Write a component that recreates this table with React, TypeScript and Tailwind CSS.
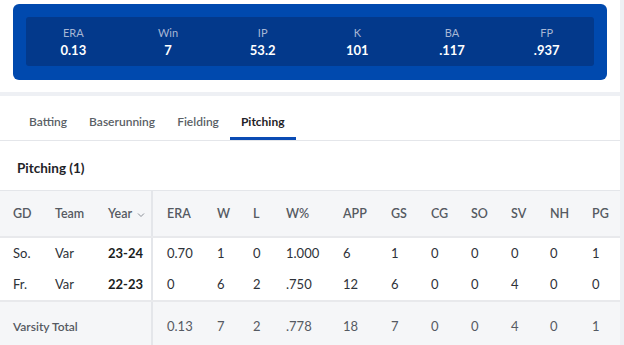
import React from "react";

const stats = [
  { label: "ERA", value: "0.13" },
  { label: "Win", value: "7" },
  { label: "IP", value: "53.2" },
  { label: "K", value: "101" },
  { label: "BA", value: ".117" },
  { label: "FP", value: ".937" },
];

const tabs = ["Batting", "Baserunning", "Fielding", "Pitching"];

const grid =
  "grid grid-cols-[42px_53px_45px_64px_36px_33px_57px_48px_40px_40px_40px_39px_42px_28px] pl-[13px]";

const statCols = ["ERA", "W", "L", "W%", "APP", "GS", "CG", "SO", "SV", "NH", "PG"];

const rows = [
  { gd: "So.", team: "Var", year: "23-24", vals: ["0.70", "1", "0", "1.000", "6", "1", "0", "0", "0", "0", "1"] },
  { gd: "Fr.", team: "Var", year: "22-23", vals: ["0", "6", "2", ".750", "12", "6", "0", "0", "4", "0", "0"] },
];

const totals = ["0.13", "7", "2", ".778", "18", "7", "0", "0", "4", "0", "1"];

export default function App() {
  return (
    <div
      className="w-[624px] h-[345px] overflow-hidden bg-[#eef0f4]"
      style={{ fontFamily: 'Lato, "Noto Sans", Arial, sans-serif' }}
    >
      {/* Top card */}
      <div className="w-[620px] h-[92px] bg-white pt-[4px] pl-[13px]">
        <div className="w-[594px] h-[76px] rounded-[6px] bg-[#0049ae] pt-[13px] px-[13px]">
          <div className="w-[568px] h-[49px] rounded-[3px] bg-[#03398b] grid grid-cols-6">
            {stats.map((s) => (
              <div key={s.label} className="flex flex-col items-center pt-[8px]">
                <span className="text-[11px] leading-[15px] text-[#a7b6d4]">{s.label}</span>
                <span className="text-[13px] leading-[18px] font-bold text-white mt-[1px]">{s.value}</span>
              </div>
            ))}
          </div>
        </div>
      </div>

      {/* Bottom card */}
      <div className="w-[620px] h-[249px] bg-white mt-[4px]">
        <div className="h-[45px] border-b border-[#e4e6ea] flex pl-[18px]">
          {tabs.map((t) => {
            const active = t === "Pitching";
            return (
              <div
                key={t}
                className={
                  "px-[11px] h-[44px] flex items-center pt-[10px] text-[12px] border-b-[3px] " +
                  (active
                    ? "border-[#0a4bb4] text-[#1f2328] font-bold"
                    : "border-transparent text-[#5a5f66] font-semibold")
                }
              >
                {t}
              </div>
            );
          })}
        </div>

        <div className="h-[49px] pl-[17px] pt-[18px] text-[13.5px] leading-[18px] font-bold text-[#1f2328]">
          Pitching (1)
        </div>

        <div className="border-t border-[#e4e6ea]">
          {/* header */}
          <div className={grid + " h-[47px] bg-[#f5f6f8] border-b-2 border-[#e8e9ec] text-[12.5px] font-semibold text-[#555a62]"}>
            <div className="flex items-center pt-[2px]">GD</div>
            <div className="flex items-center pt-[2px]">Team</div>
            <div className="flex items-center pt-[2px] border-r-2 border-[#e4e6ea]">
              Year
              <svg width="8" height="6" viewBox="0 0 8 6" className="ml-[5px] mt-[1px]">
                <path d="M1 1.5 L4 4.5 L7 1.5" stroke="#8a8f97" strokeWidth="1" fill="none" />
              </svg>
            </div>
            {statCols.map((c, i) => (
              <div key={c} className={(i === 0 ? "pl-[14px] " : "") + "flex items-center pt-[2px]"}>
                {c}
              </div>
            ))}
          </div>

          {rows.map((r, ri) => (
            <div
              key={r.year}
              className={
                grid +
                " h-[32px] bg-white text-[13px] text-[#2e3238]" +
                (ri === rows.length - 1 ? " border-b-2 border-[#e8e9ec]" : "")
              }
            >
              <div className="flex items-center">{r.gd}</div>
              <div className="flex items-center">{r.team}</div>
              <div className="flex items-center font-bold text-[#1a1d21] border-r-2 border-[#e4e6ea]">{r.year}</div>
              {r.vals.map((v, i) => (
                <div key={i} className={(i === 0 ? "pl-[14px] " : "") + "flex items-center"}>
                  {v}
                </div>
              ))}
            </div>
          ))}

          <div className={grid + " h-[50px] bg-[#f5f6f8] text-[12px] text-[#555a62]"}>
            <div className="col-span-3 flex items-center font-semibold border-r-2 border-[#e4e6ea]">
              Varsity Total
            </div>
            {totals.map((v, i) => (
              <div key={i} className={(i === 0 ? "pl-[14px] " : "") + "flex items-center text-[13px]"}>
                {v}
              </div>
            ))}
          </div>
        </div>
      </div>
    </div>
  );
}
